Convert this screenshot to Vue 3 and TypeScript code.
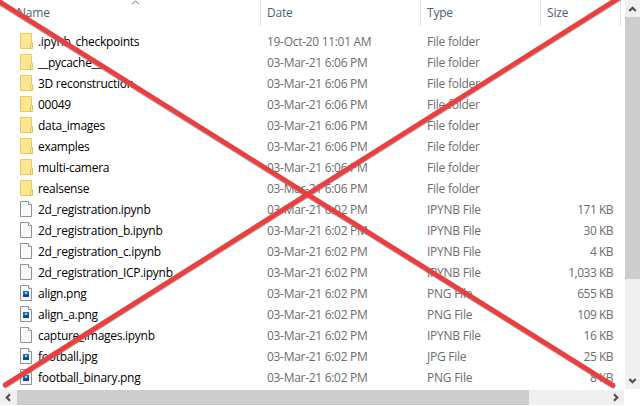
<script setup lang="ts">
type Kind = 'folder' | 'file' | 'image'
interface Entry {
  name: string
  date: string
  type: string
  size: string
  kind: Kind
}
const early = '03-Mar-21 6:02 PM'
const late = '03-Mar-21 6:06 PM'
const folder = (name: string, date = late): Entry => ({ name, date, type: 'File folder', size: '', kind: 'folder' })
const file = (name: string, type: string, size: string, kind: Kind = 'file'): Entry => ({ name, date: early, type: type + ' File', size: size + ' KB', kind })

const entries: Entry[] = [
  folder('.ipynb_checkpoints', '19-Oct-20 11:01 AM'),
  folder('__pycache__'),
  folder('3D reconstruction'),
  folder('00049'),
  folder('data_images'),
  folder('examples'),
  folder('multi-camera'),
  folder('realsense'),
  file('2d_registration.ipynb', 'IPYNB', '171'),
  file('2d_registration_b.ipynb', 'IPYNB', '30'),
  file('2d_registration_c.ipynb', 'IPYNB', '4'),
  file('2d_registration_ICP.ipynb', 'IPYNB', '1,033'),
  file('align.png', 'PNG', '655', 'image'),
  file('align_a.png', 'PNG', '109', 'image'),
  file('capture_images.ipynb', 'IPYNB', '16'),
  file('football.jpg', 'JPG', '25', 'image'),
  file('football_binary.png', 'PNG', '8', 'image'),
]
</script>

<template>
  <div class="explorer">
    <div class="pane">
      <div class="header grid">
        <div class="cell name">Name
          <svg class="sort" width="9" height="5" viewBox="0 0 9 5"><path d="M1 4.3 4.5.8 8 4.3" fill="none" stroke="#777" /></svg>
        </div>
        <div class="cell">Date</div>
        <div class="cell">Type</div>
        <div class="cell">Size</div>
      </div>
      <div class="rows">
        <div v-for="e in entries" :key="e.name" class="row grid">
          <div class="cell label">
            <svg v-if="e.kind === 'folder'" class="icon" width="14" height="16" viewBox="0 0 14 16">
              <path d="M.5.5h11v15H.5z" fill="#ffe694" stroke="#edca58" />
              <path d="M10.5 15.5v-5l1-1h1v6z" fill="#ffe694" stroke="#e8c34c" />
            </svg>
            <svg v-else class="icon" width="14" height="16" viewBox="0 0 14 16">
              <path d="M.5.5h8l3 3v12H.5z" fill="#f8f9f9" stroke="#929292" />
              <path d="M8.5.5v3h3" fill="#fff" stroke="#929292" />
              <g v-if="e.kind === 'image'">
                <path d="M3 6h6v6H3z" fill="#1672c4" />
                <path d="M5 7h2v2H5z" fill="#8fd0f5" />
                <path d="m3 10 1.5-1L6 10l1.5-1.5L9 9.5V12H3z" fill="#124a8c" />
              </g>
            </svg>
            <span>{{ e.name }}</span>
          </div>
          <div class="cell date">{{ e.date }}</div>
          <div class="cell type">{{ e.type }}</div>
          <div class="cell size">{{ e.size }}</div>
        </div>
      </div>
    </div>
    <div class="vbar">
      <svg width="15" height="17" viewBox="0 0 15 17"><path d="m4.3 11 3.2-3.2 3.2 3.2" /></svg>
      <div class="vthumb"></div>
      <svg class="down" width="15" height="17" viewBox="0 0 15 17"><path d="m4.3 7 3.2 3.2L10.700 7" /></svg>
    </div>
    <div class="hbar">
      <svg width="17" height="15" viewBox="0 0 17 15"><path d="M10 4.300 6.800 7.500l3.200 3.200" /></svg>
      <div class="hthumb"></div>
      <svg class="right" width="17" height="15" viewBox="0 0 17 15"><path d="m7 4.300 3.200 3.200L7 10.700" /></svg>
    </div>
    <svg class="cross" width="641" height="406" viewBox="0 0 641 406">
      <g fill="none" stroke="#777" stroke-opacity=".65" stroke-width="5.8" stroke-linecap="round">
        <path d="M-4 0 612.7 385.6" /><path d="M5.5 385.2 622-3.5" />
      </g>
      <g fill="none" stroke="#f03c3c" stroke-width="4.6" stroke-linecap="round">
        <path d="M-4-.5 612.7 385.2" /><path d="M5.5 384.8 622-4" />
      </g>
    </svg>
  </div>
</template>

<style>
body { background: #fff; overflow: hidden; }
</style>
<style scoped>
.explorer {
  position: relative;
  display: grid;
  grid-template: 390px 16px / 625px 16px;
  width: 641px;
  height: 406px;
  background: #fff;
  font: 12px/21px "Open Sans", "Noto Sans", sans-serif;
  color: #6d6d6d;
}
.pane { overflow: hidden; }
.grid { display: grid; grid-template-columns: 261px 160px 120px 80px; }
.header { height: 25px; color: #4c607a; line-height: 26px; letter-spacing: -.2px; }
.header .cell { border-right: 1px solid #e3e3e3; }
.cell { box-sizing: border-box; padding-left: 6px; white-space: nowrap; }
.header .name { position: relative; padding-left: 17px; }
.sort { position: absolute; left: 131px; top: 0; }
.rows { padding-top: 6px; }
.row { height: 21px; }
.label { display: flex; align-items: flex-start; gap: 4px; padding-left: 20px; color: #000; letter-spacing: -.28px; }
.icon { flex: none; margin-top: 2px; }
.date { letter-spacing: -.3px; }
.type { letter-spacing: -.24px; }
.size { padding-right: 8px; text-align: right; letter-spacing: -.5px; }
.vbar { width: 15px; height: 389px; display: flex; flex-direction: column; background: #f0f0f0; }
.vthumb { height: 262px; background: #cdcdcd; }
.down { margin-top: auto; }
.hbar { width: 624px; height: 15px; display: flex; background: #f0f0f0; }
.hthumb { width: 512px; background: #cdcdcd; }
.right { margin-left: auto; }
.vbar path, .hbar path { fill: none; stroke: #505050; stroke-width: 2.2; }
.cross { position: absolute; left: 0; top: 0; }
</style>
